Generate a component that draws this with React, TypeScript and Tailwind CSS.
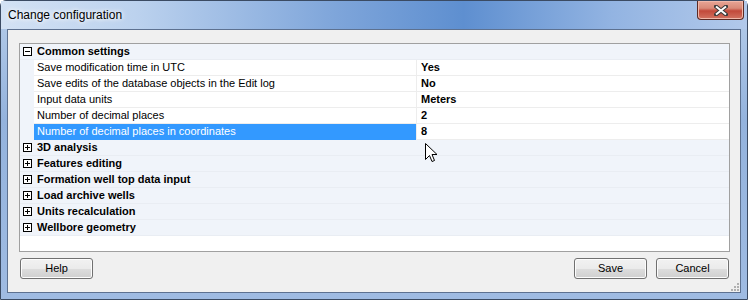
import React from 'react';

type Prop = { name: string; value: string; selected?: boolean };
type Category = { name: string; open?: boolean; props?: Prop[] };

const categories: Category[] = [
  {
    name: 'Common settings',
    open: true,
    props: [
      { name: 'Save modification time in UTC', value: 'Yes' },
      { name: 'Save edits of the database objects in the Edit log', value: 'No' },
      { name: 'Input data units', value: 'Meters' },
      { name: 'Number of decimal places', value: '2' },
      { name: 'Number of decimal places in coordinates', value: '8', selected: true },
    ],
  },
  { name: '3D analysis' },
  { name: 'Features editing' },
  { name: 'Formation well top data input' },
  { name: 'Load archive wells' },
  { name: 'Units recalculation' },
  { name: 'Wellbore geometry' },
];

function ExpandBox({ open }: { open?: boolean }) {
  return (
    <svg width="9" height="9" viewBox="0 0 9 9" className="shrink-0">
      <rect x="0.5" y="0.5" width="8" height="8" fill="#ffffff" stroke="#000000" />
      <line x1="2" y1="4.5" x2="7" y2="4.5" stroke="#000000" />
      {!open && <line x1="4.5" y1="2" x2="4.5" y2="7" stroke="#000000" />}
    </svg>
  );
}

function WinButton({ label, className }: { label: string; className?: string }) {
  return (
    <button
      className={
        'h-[21px] w-[73px] rounded-[3px] border border-[#707070] bg-[linear-gradient(to_bottom,#f2f2f2_0%,#ebebeb_50%,#dddddd_51%,#cfcfcf_100%)] text-[11px] leading-[19px] text-black shadow-[inset_0_0_0_1px_#fcfcfc] ' +
        (className ?? '')
      }
    >
      {label}
    </button>
  );
}

function CategoryRow({ cat }: { cat: Category }) {
  return (
    <div className="flex h-[16px] items-center border-b border-[#e9edf3] bg-[#f0f4fa]">
      <div className="flex w-[15px] justify-end pr-[3px]">
        <ExpandBox open={cat.open} />
      </div>
      <span className="pl-[2px] font-bold leading-[15px]">{cat.name}</span>
    </div>
  );
}

function PropRow({ p }: { p: Prop }) {
  return (
    <div className="flex h-[16px]">
      <div className="w-[14px] shrink-0 bg-[#f0f4fa]" />
      <div
        className={
          p.selected
            ? 'flex w-[382px] shrink-0 items-center border-b border-[#3399ff] bg-[#3399ff] pl-[3px] leading-[15px] text-white'
            : 'flex w-[382px] shrink-0 items-center border-b border-[#ededed] pl-[3px] leading-[15px]'
        }
      >
        {p.name}
      </div>
      <div className="w-px shrink-0 bg-[#ededed]" />
      <div className="flex flex-1 items-center border-b border-[#ededed] pl-[4px] font-bold leading-[15px]">
        {p.value}
      </div>
    </div>
  );
}

export default function App() {
  return (
    <div
      className="relative h-[300px] w-[750px] overflow-hidden bg-white text-[11px] text-black"
      style={{ fontFamily: '"Liberation Sans", Arial, sans-serif' }}
    >
      <div className="flex h-[300px] w-[748px] flex-col rounded-t-[6px] border border-[#3b4b63] bg-[linear-gradient(to_bottom,#b6cdea,#94b3dd_40%,#9fbbe2)]">
        {/* title bar */}
        <div className="flex h-[28px] items-start bg-[linear-gradient(to_right,#d3e2f4_0%,#bcd2ee_18%,#7ea5da_45%,#5e8fd0_62%,#93b4e2_82%,#b2c9ea_100%)]">
          <span
            className="pl-[7px] pt-[6px] text-[12px] leading-[16px]"
            style={{ textShadow: '0 0 6px #ffffff, 0 0 4px #ffffff' }}
          >
            Change configuration
          </span>
          <div className="ml-auto mr-[3px] flex h-[19px] w-[47px] items-center justify-center rounded-b-[4px] border border-t-0 border-[#5b2a24] bg-[linear-gradient(to_bottom,#e8a696_0%,#d98a78_40%,#c2493a_55%,#d27361_100%)] shadow-[inset_0_0_0_1px_#f0b8aa]">
            <svg width="14" height="11" viewBox="0 0 14 11">
              <path
                d="M2 1.5 L12 9.5 M12 1.5 L2 9.5"
                stroke="#3a3a3a"
                strokeWidth="4"
                strokeLinecap="round"
              />
              <path d="M2 1.5 L12 9.5 M12 1.5 L2 9.5" stroke="#ffffff" strokeWidth="2" />
            </svg>
          </div>
        </div>

        {/* client area */}
        <div className="mx-[6px] mb-[6px] flex flex-1 flex-col border border-[#5d7190] bg-[#f0f0f0]">
          <div className="ml-[11px] mt-[13px] h-[209px] w-[711px] border border-[#a0a0a0] bg-white">
            {categories.map((cat) => (
              <div key={cat.name}>
                <CategoryRow cat={cat} />
                {cat.open && cat.props?.map((p) => <PropRow key={p.name} p={p} />)}
              </div>
            ))}
          </div>

          <div className="mt-[6px] flex">
            <WinButton label="Help" className="ml-[12px]" />
            <WinButton label="Save" className="ml-auto" />
            <WinButton label="Cancel" className="ml-[9px] mr-[11px]" />
          </div>

          <div className="mt-auto flex justify-end pb-[1px] pr-[1px]">
            <svg width="9" height="9" viewBox="0 0 9 9">
              <g fill="#b0b0b0">
                <rect x="7" y="1" width="2" height="2" />
                <rect x="4" y="4" width="2" height="2" />
                <rect x="7" y="4" width="2" height="2" />
                <rect x="1" y="7" width="2" height="2" />
                <rect x="4" y="7" width="2" height="2" />
                <rect x="7" y="7" width="2" height="2" />
              </g>
            </svg>
          </div>
        </div>
      </div>

      {/* mouse pointer */}
      <svg className="absolute left-[425px] top-[143px]" width="13" height="21" viewBox="0 0 13 21">
        <path
          d="M0.5 0.5 L0.5 16.5 L4.5 12.5 L7 18.5 L9.5 17.5 L7 11.5 L12 11.5 Z"
          fill="#ffffff"
          stroke="#000000"
          strokeWidth="1"
          strokeLinejoin="round"
        />
      </svg>
    </div>
  );
}
